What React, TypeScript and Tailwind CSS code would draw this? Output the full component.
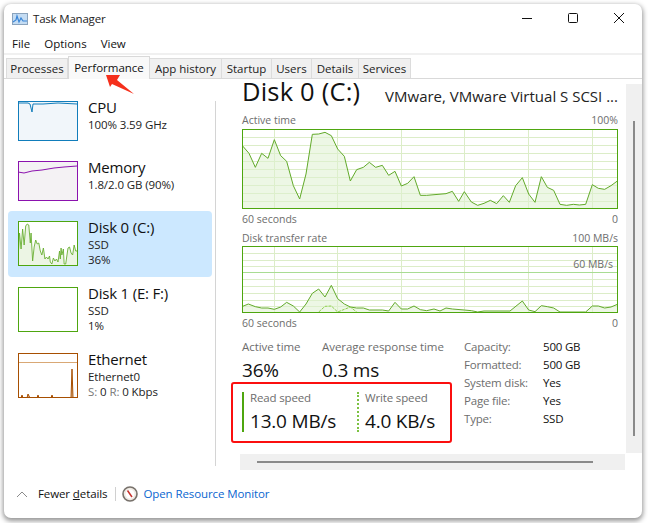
import React from "react";

const FONT = "font-['Open_Sans','Noto_Sans',sans-serif]";

type P = [number, number];
const cpuLine: P[] = [[0,2],[10,2],[12,3],[14,11],[15,3],[25,3],[40,2],[59,3]];
const memLine: P[] = [[0,11],[6,12],[14,10],[24,9],[36,7],[46,6],[59,5]];
const disk0: P[] = [[0,38],[2,12],[4,28],[6,8],[8,24],[10,5],[12,3],[14,4],[16,22],[17,12],[19,40],[21,26],[23,19],[25,23],[27,22],[29,30],[31,34],[33,27],[35,38],[37,36],[39,38],[41,35],[42,41],[44,43],[46,37],[48,40],[50,38],[52,41],[54,30],[55,38],[56,27],[57,34],[59,28],[60,43],[62,43],[65,27],[67,26],[69,32],[71,34],[73,24],[75,30],[77,30],[78,28]];
const active: P[] = ([[38,141],[57,163],[76,205],[95,163],[114,178],[133,122],[152,170],[170,187],[190,260],[209,300],[228,225],[247,106],[266,105],[285,100],[304,110],[323,150],[343,172],[361,246],[380,212],[400,205],[418,190],[437,205],[457,199],[476,229],[495,217],[514,261],[533,253],[552,233],[571,289],[590,289],[648,284],[667,277],[686,307],[703,278],[724,309],[743,319],[762,313],[781,304],[800,314],[820,290],[838,310],[857,260],[877,236],[896,285],[915,310],[934,233],[952,265],[971,274],[990,316],[1010,319],[1030,316],[1048,318],[1067,316],[1087,257],[1105,268],[1124,271],[1143,260],[1162,246]] as P[]).map(([x,y]) => [x/3-12, y/3-30] as P);
const read: P[] = ([[38,248],[55,241],[76,249],[95,253],[114,253],[133,257],[152,250],[170,236],[190,247],[209,265],[228,241],[247,209],[266,196],[285,220],[304,185],[323,225],[343,241],[361,250],[380,253],[400,253],[418,259],[457,259],[476,262],[495,236],[514,256],[533,256],[552,247],[571,258],[590,261],[612,256],[630,262],[648,253],[667,256],[703,259],[724,261],[743,265],[762,262],[840,262],[877,232],[896,259],[915,264],[934,246],[952,249],[971,253],[990,265],[1067,265],[1087,247],[1105,247],[1124,253],[1143,250],[1162,242]] as P[]).map(([x,y]) => [x/3-12, (y-67)/3] as P);
const write: P[] = ([[266,265],[285,248],[304,247],[323,265],[343,257],[361,250],[380,265]] as P[]).map(([x,y]) => [x/3-12, (y-67)/3] as P);

const pts = (a: P[]) => a.map((p) => p.join(",")).join(" ");
const area = (a: P[], h: number) => `${a[0][0]},${h} ${pts(a)} ${a[a.length - 1][0]},${h}`;

function Graph({ h, rows, limit, children }: { h: number; rows: number[]; limit?: number; children?: React.ReactNode }) {
  return (
    <svg width="376" height={h} viewBox={`0 0 376 ${h}`} className="block">
      <rect x="0" y="0" width="376" height={h} fill="#ffffff" />
      {rows.map((y) => (
        <line key={y} x1="0" x2="376" y1={y} y2={y} stroke="#dcedc8" strokeWidth="1" />
      ))}
      {[32.5, 95.5, 159.5, 222.5, 286.5, 350.5].map((x) => (
        <line key={x} x1={x} x2={x} y1="0" y2={h} stroke="#dcedc8" strokeWidth="1" />
      ))}
      {limit !== undefined && <line x1="0" x2="376" y1={limit} y2={limit} stroke="#a9dc93" strokeWidth="1" />}
      {children}
      <rect x="0.5" y="0.5" width="375" height={h - 1} fill="none" stroke="#4ea60f" strokeWidth="1" />
    </svg>
  );
}

function Thumb({ h, color, fill, children }: { h: number; color: string; fill?: string; children?: React.ReactNode }) {
  return (
    <svg width="60" height={h} viewBox={`0 0 60 ${h}`} className="block shrink-0">
      <rect x="0" y="0" width="60" height={h} fill={fill ?? "#ffffff"} />
      {children}
      <rect x="0.5" y="0.5" width="59" height={h - 1} fill="none" stroke={color} strokeWidth="1" />
    </svg>
  );
}

function Row({ thumb, title, lines, selected, height }: { thumb: React.ReactNode; title: string; lines: React.ReactNode[]; selected?: boolean; height: string }) {
  return (
    <div className={`flex items-start pl-[10px] pt-[10px] rounded-sm ${height} ${selected ? "bg-[#cce8ff]" : ""}`}>
      {thumb}
      <div className="ml-[10px] -mt-[4px] flex flex-col">
        <div className="text-[15px] leading-[20px] text-[#111] tracking-[-0.2px]">{title}</div>
        <div className="text-[11.5px] leading-[15px] text-[#222] tracking-[-0.1px]">
          {lines.map((l, i) => (
            <div key={i}>{l}</div>
          ))}
        </div>
      </div>
    </div>
  );
}

function Tab({ label, w, active }: { label: string; w: string; active?: boolean }) {
  return active ? (
    <div className={`${w} h-[23px] -mt-[2px] flex items-center justify-center border border-b-0 border-[#d9d9d9] bg-[#f9f9f9] text-[#111] relative z-10`}>{label}</div>
  ) : (
    <div className={`${w} h-[20px] flex items-center justify-center border-t border-r border-[#dcdcdc] bg-[#f0f0f0] text-[#222]`}>{label}</div>
  );
}

function Stat({ label, value, w }: { label: string; value: string; w: string }) {
  return (
    <div className={w}>
      <div className="text-[11.5px] leading-[16px] text-[#6d6d6d] tracking-[-0.05px]">{label}</div>
      <div className="text-[19px] leading-[26px] mt-[2px] text-[#111] tracking-[-0.2px]">{value}</div>
    </div>
  );
}

const props: [string, string][] = [["Capacity:", "500 GB"], ["Formatted:", "500 GB"], ["System disk:", "Yes"], ["Page file:", "Yes"], ["Type:", "SSD"]];

export default function App() {
  const activeRows = [8, 16, 24, 32, 40, 48, 56, 64, 72].map((v) => v + 0.5);
  const rateRows = [7, 14, 20, 33, 40, 47, 54, 60].map((v) => v + 0.5);
  return (
    <div className={`w-[648px] h-[523px] overflow-hidden bg-white pl-[4px] pt-[4px] pr-[6px] pb-[5px] ${FONT}`}>
      <div className="relative w-[638px] h-[514px] bg-white rounded-[7px] flex flex-col text-[11.5px] shadow-[0_2px_5px_1px_rgba(0,0,0,0.42)]">
        <div className="h-[26px] flex items-center pl-[8px] shrink-0">
          <svg width="16" height="12" viewBox="0 0 16 12" className="mt-[3px]">
            <rect x="0.5" y="0.5" width="15" height="11" fill="#c4dcf3" stroke="#8aa3bd" />
            <path d="M1 9 L4 7 L5 3 L7 9 L9 5 L11 8 L15 8" fill="none" stroke="#3a86d8" strokeWidth="1.2" />
          </svg>
          <span className="ml-[5px] text-[#222] mt-[4px] tracking-[-0.2px]">Task Manager</span>
          <div className="ml-auto flex items-center mr-[18px] gap-[36px] mt-[2px]">
            <svg width="10" height="10" viewBox="0 0 10 10"><line x1="0" x2="10" y1="5.5" y2="5.5" stroke="#111" /></svg>
            <svg width="10" height="10" viewBox="0 0 10 10"><rect x="0.5" y="0.5" width="9" height="9" rx="1" fill="none" stroke="#111" /></svg>
            <svg width="10" height="10" viewBox="0 0 10 10"><path d="M0 0 L10 10 M10 0 L0 10" stroke="#111" strokeWidth="1" /></svg>
          </div>
        </div>
        <div className="h-[23px] flex items-center pl-[8px] gap-[14px] shrink-0 text-[#111] pt-[5px]">
          <span>File</span>
          <span>Options</span>
          <span>View</span>
        </div>
        <div className="h-[2px] bg-[#f0f0f0] shrink-0" />
        <div className="h-[21px] mt-[3px] pl-[2px] flex items-start border-b border-[#d9d9d9] shrink-0">
          <Tab label="Processes" w="w-[62px] border-l" />
          <Tab label="Performance" w="w-[82px]" active />
          <Tab label="App history" w="w-[72px]" />
          <Tab label="Startup" w="w-[50px]" />
          <Tab label="Users" w="w-[40px]" />
          <Tab label="Details" w="w-[47px]" />
          <Tab label="Services" w="w-[52px]" />
        </div>

        <div className="flex h-[391px] shrink-0">
          <div className="w-[211px] pl-[4px] pr-[3px] pt-[12px] shrink-0">
            <Row
              height="h-[60px]"
              title="CPU"
              lines={["100%  3.59 GHz"]}
              thumb={
                <Thumb h={40} color="#117dbb" fill="#f1f6fa">
                  <polyline points={pts(cpuLine)} fill="none" stroke="#117dbb" strokeWidth="1" />
                </Thumb>
              }
            />
            <Row
              height="h-[60px]"
              title="Memory"
              lines={["1.8/2.0 GB (90%)"]}
              thumb={
                <Thumb h={40} color="#8b12ae" fill="#f4f2f4">
                  <polyline points={pts(memLine)} fill="none" stroke="#8b12ae" strokeWidth="1" />
                </Thumb>
              }
            />
            <Row
              selected
              height="h-[66px]"
              title="Disk 0 (C:)"
              lines={["SSD", "36%"]}
              thumb={
                <Thumb h={45} color="#4ea60f">
                  <svg x="0" y="0" width="60" height="45" viewBox="0 0 78 45" preserveAspectRatio="none">
                    <polygon points={area(disk0, 45)} fill="#ecf5e4" />
                    <polyline points={pts(disk0)} fill="none" stroke="#66ad2f" strokeWidth="1" />
                  </svg>
                </Thumb>
              }
            />
            <Row height="h-[66px]" title="Disk 1 (E: F:)" lines={["SSD", "1%"]} thumb={<Thumb h={45} color="#4ea60f" />} />
            <Row
              height="h-[66px]"
              title="Ethernet"
              lines={[
                "Ethernet0",
                <span key="s"><span className="text-[#777]">S:</span> 0 <span className="text-[#777]">R:</span> 0 Kbps</span>,
              ]}
              thumb={
                <Thumb h={45} color="#a74f01">
                  <line x1="0" x2="60" y1="9.5" y2="9.5" stroke="#d9a875" />
                  <path d="M3 45 L4 42 L5 45 M9 45 L10 41 L12 45 M19 45 L20 42 L21 45 M33 45 L34 42 L35 45 M53 45 L54 16 L55 45 Z" fill="#e3bd96" stroke="#a74f01" strokeWidth="1" />
                </Thumb>
              }
            />
          </div>

          <div className="w-px h-[365px] mt-[22px] bg-[#d4d4d4] shrink-0" />

          <div className="flex flex-col ml-[24px] mt-[5px] w-[385px] shrink-0">
            <div className="h-[370px] w-[385px] pl-[2px]">
              <div className="w-[376px] -mt-[5px]">
                <div className="h-[32px] flex items-end justify-between">
                  <span className="text-[25.5px] leading-[18px] text-[#111] tracking-[0.2px] mb-[11px]">Disk 0 (C:)</span>
                  <span className="text-[15px] leading-[22px] text-[#222] mb-[4px] tracking-[0px]">VMware, VMware Virtual S SCSI ...</span>
                </div>
                <div className="flex justify-between mt-[1px] h-[17px] pt-[1px] items-center text-[10.5px] text-[#6d6d6d]">
                  <span>Active time</span>
                  <span>100%</span>
                </div>
                <Graph h={80} rows={activeRows}>
                  <polygon points={area(active, 80)} fill="#dff0d0" fillOpacity="0.55" />
                  <polyline points={pts(active)} fill="none" stroke="#62aa2a" strokeWidth="1" />
                </Graph>
                <div className="flex justify-between h-[19px] pt-[2px] items-center text-[10.5px] text-[#6d6d6d]">
                  <span>60 seconds</span>
                  <span>0</span>
                </div>
                <div className="flex justify-between h-[18px] pt-[3px] items-center text-[10.5px] text-[#6d6d6d]">
                  <span>Disk transfer rate</span>
                  <span>100 MB/s</span>
                </div>
                <div className="relative">
                  <Graph h={67} rows={rateRows} limit={26.5}>
                    <polygon points={area(read, 67)} fill="#dff0d0" fillOpacity="0.55" />
                    <polyline points={pts(read)} fill="none" stroke="#62aa2a" strokeWidth="1" />
                    <polyline points={pts(write)} fill="none" stroke="#8fd14f" strokeWidth="1" strokeDasharray="3 1" />
                  </Graph>
                  <span className="absolute right-[5px] top-[11px] text-[10.5px] leading-[14px] text-[#6d6d6d]">60 MB/s</span>
                </div>
                <div className="flex justify-between h-[19px] pt-[2px] items-center text-[10.5px] text-[#6d6d6d]">
                  <span>60 seconds</span>
                  <span>0</span>
                </div>
                <div className="flex mt-[7px]">
                  <div className="w-[222px]">
                    <div className="flex">
                      <Stat label="Active time" value="36%" w="w-[80px]" />
                      <Stat label="Average response time" value="0.3 ms" w="w-[142px]" />
                    </div>
                    <div className="flex mt-[7px]">
                      <div className="w-[2px] h-[40px] mt-[2px] bg-[#4ea60f]" />
                      <div className="ml-[6px] w-[107px]">
                        <div className="text-[11.5px] leading-[16px] text-[#6d6d6d] tracking-[-0.15px]">Read speed</div>
                        <div className="text-[19px] leading-[26px] mt-[2px] text-[#111] tracking-[-0.2px]">13.0 MB/s</div>
                      </div>
                      <div className="w-0 h-[40px] mt-[2px] border-l-2 border-dotted border-[#7cc242]" />
                      <div className="ml-[6px]">
                        <div className="text-[11.5px] leading-[16px] text-[#6d6d6d] tracking-[-0.15px]">Write speed</div>
                        <div className="text-[19px] leading-[26px] mt-[2px] text-[#111] tracking-[-0.2px]">4.0 KB/s</div>
                      </div>
                    </div>
                  </div>
                  <div className="flex flex-col -mt-px">
                    {props.map(([k, v]) => (
                      <div key={k} className="flex h-[18px] items-center text-[11.5px] tracking-[-0.2px]">
                        <span className="w-[79px] text-[#6d6d6d]">{k}</span>
                        <span className="text-[#111]">{v}</span>
                      </div>
                    ))}
                  </div>
                </div>
              </div>
            </div>
            <div className="h-[16px] w-[385px] bg-[#f0f0f0] flex items-center pl-[17px] shrink-0">
              <div className="w-[336px] h-[2px] bg-[#8a8a8a]" />
            </div>
          </div>

          <div className="w-[16px] h-[369px] mt-[5px] ml-px bg-[#f0f0f0] shrink-0 flex justify-center pt-[37px]">
            <div className="w-[2px] h-[315px] bg-[#8a8a8a]" />
          </div>
        </div>

        <div className="flex items-center pl-[12px] flex-1">
          <svg width="12" height="8" viewBox="0 0 12 8"><path d="M1 7 L6 2 L11 7" fill="none" stroke="#8a8a8a" strokeWidth="1" /></svg>
          <span className="ml-[10px] text-[#111] tracking-[-0.1px]">
            Fewer <span className="underline">d</span>etails
          </span>
          <div className="ml-[8px] w-px h-[14px] bg-[#d0d0d0]" />
          <svg width="16" height="16" viewBox="0 0 16 16" className="ml-[6px]">
            <circle cx="8" cy="8" r="7" fill="#efe9e2" stroke="#77716b" strokeWidth="1.6" />
            <circle cx="8" cy="8" r="4.5" fill="#fff" />
            <path d="M5.5 4.5 L10 11" stroke="#c8322b" strokeWidth="1.5" />
          </svg>
          <span className="ml-[5px] text-[#0a66d0] tracking-[-0.1px]">Open Resource Monitor</span>
        </div>

        <div className="absolute left-[226.5px] top-[378px] w-[221px] h-[61px] border-[2.5px] border-[#fb0f0f] rounded-[3px]" />
        <svg width="30" height="22" viewBox="0 0 30 22" className="absolute left-[102px] top-[71px] z-20">
          <polygon points="0,0 14,0 11,5 28,19 6,9 4,12" fill="#f5301c" />
        </svg>
      </div>
    </div>
  );
}
